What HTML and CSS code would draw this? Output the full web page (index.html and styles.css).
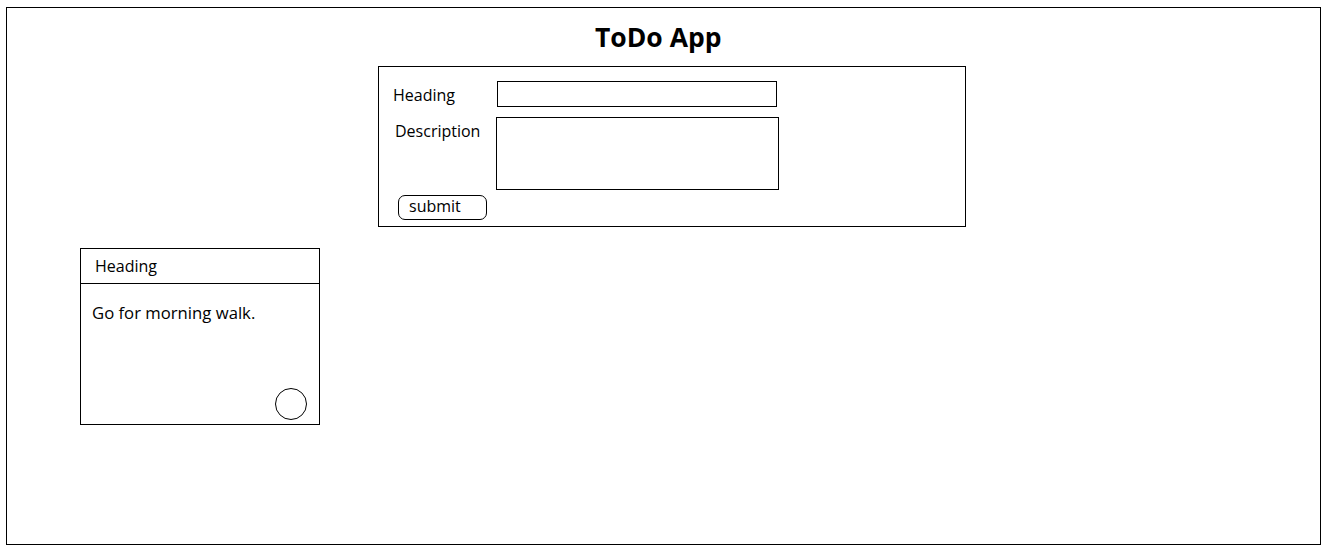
FILE: index.html
```html
<!DOCTYPE html>
<html>
<head>
<meta charset="utf-8">
<link rel="stylesheet" href="styles.css">
</head>
<body>
<div class="frame">
  <h1 class="title">ToDo App</h1>
  <form class="todo-form">
    <div class="row">
      <label class="lbl lbl-heading">Heading</label>
      <input class="in-heading" type="text">
    </div>
    <div class="row">
      <label class="lbl lbl-desc">Description</label>
      <textarea class="in-desc"></textarea>
    </div>
    <button class="submit" type="button">submit</button>
  </form>
  <div class="card">
    <div class="card-head">Heading</div>
    <div class="card-body">
      <p class="card-text">Go for morning walk.</p>
      <span class="check"></span>
    </div>
  </div>
</div>
</body>
</html>
```
FILE: styles.css
```css
html, body {
  margin: 0;
  padding: 0;
  background: #fff;
}
body {
  font-family: "Open Sans", "Liberation Sans", sans-serif;
  color: #000;
}
.frame {
  box-sizing: border-box;
  margin: 7px 0 0 6px;
  width: 1315px;
  height: 538px;
  border: 1px solid #000;
  display: flex;
  flex-direction: column;
}
.title {
  margin: 10px 0 0 0;
  padding-left: 588px;
  font-size: 26.5px;
  line-height: 38px;
  font-weight: 700;
  height: 47px;
}
.todo-form {
  box-sizing: border-box;
  margin: 1px 0 0 371px;
  width: 588px;
  height: 161px;
  border: 1px solid #000;
  padding: 14px 0 0 14px;
  display: flex;
  flex-direction: column;
}
.row {
  display: flex;
  align-items: flex-start;
}
.lbl {
  font-size: 16px;
  line-height: 22px;
  width: 104px;
}
.lbl-heading {
  padding-top: 3px;
}
.lbl-desc {
  padding-left: 2px;
  width: 101px;
  padding-top: 3px;
}
.in-heading {
  box-sizing: border-box;
  width: 280px;
  height: 26px;
  border: 1px solid #000;
  margin: 0;
  padding: 0;
  outline: none;
}
.row + .row {
  margin-top: 10px;
}
.in-desc {
  box-sizing: border-box;
  width: 283px;
  height: 73px;
  border: 1px solid #000;
  margin: 0;
  padding: 0;
  resize: none;
  outline: none;
}
.submit {
  box-sizing: border-box;
  margin: 5px 0 0 5px;
  width: 89px;
  height: 25px;
  border: 1px solid #000;
  border-radius: 7px;
  background: #fff;
  font-family: "Open Sans", "Liberation Sans", sans-serif;
  font-size: 16px;
  line-height: 18px;
  color: #000;
  text-align: left;
  padding: 0 0 3px 10px;
}
.card {
  box-sizing: border-box;
  margin: 21px 0 0 73px;
  width: 240px;
  height: 177px;
  border: 1px solid #000;
  display: flex;
  flex-direction: column;
}
.card-head {
  box-sizing: border-box;
  height: 35px;
  border-bottom: 1px solid #000;
  padding: 6px 0 0 14px;
  font-size: 16px;
  line-height: 22px;
}
.card-body {
  flex: 1;
  display: flex;
  flex-direction: column;
  padding: 0 12px 4px 11px;
}
.card-text {
  margin: 18px 0 0 0;
  font-size: 16.7px;
  line-height: 22px;
  flex: 1;
}
.check {
  align-self: flex-end;
  width: 32px;
  height: 32px;
  box-sizing: border-box;
  border: 1px solid #000;
  border-radius: 50%;
}
```
